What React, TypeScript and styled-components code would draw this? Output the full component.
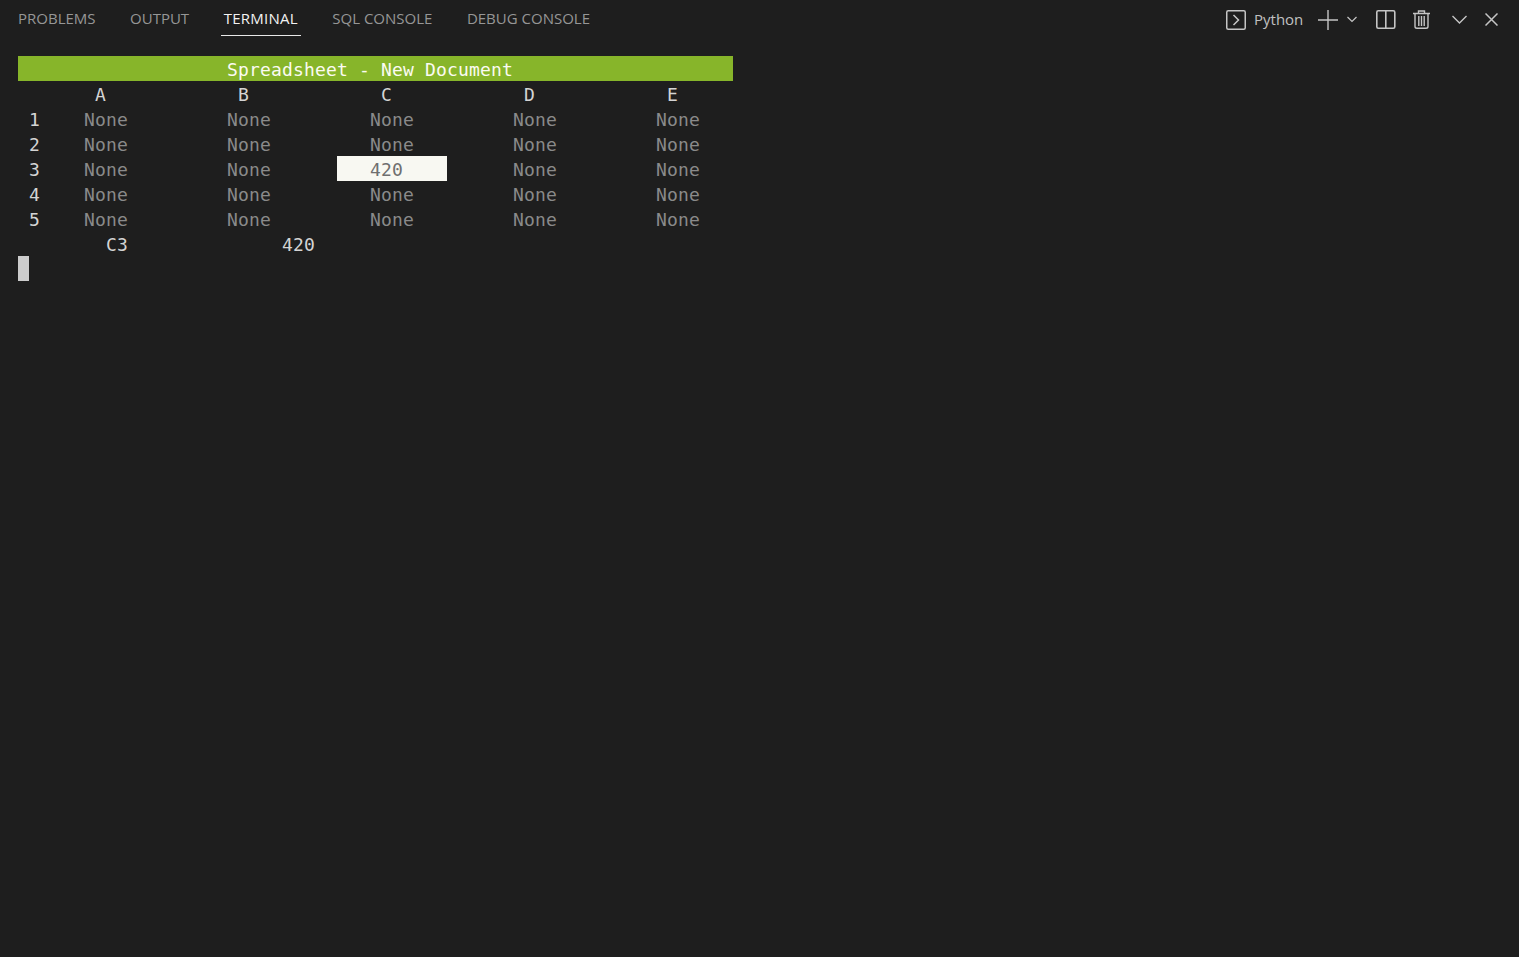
import React from "react";
import styled, { createGlobalStyle } from "styled-components";

const Global = createGlobalStyle`
  html, body { margin: 0; padding: 0; background: #1e1e1e; }
  #root { min-height: 957px; }
`;

const Page = styled.div`
  width: 1519px;
  height: 957px;
  background: #1e1e1e;
  display: flex;
  flex-direction: column;
  overflow: hidden;
`;

const Header = styled.header`
  height: 36px;
  padding: 0 21px 0 15px;
  display: flex;
  justify-content: space-between;
  align-items: flex-start;
`;

const Tabs = styled.nav`
  display: flex;
  gap: 28.5px;
`;

const Tab = styled.div<{ $active?: boolean }>`
  height: 35px;
  padding: 0 3px;
  line-height: 37px;
  font-family: "Open Sans", "Liberation Sans", sans-serif;
  font-size: 15px;
  letter-spacing: ${(p) => (p.$active ? "0.25px" : "0")};
  color: ${(p) => (p.$active ? "#f2f2f2" : "#969696")};
  border-bottom: 1px solid ${(p) => (p.$active ? "#e8e8e8" : "transparent")};
  white-space: nowrap;
`;

const Actions = styled.div`
  display: flex;
  align-items: center;
  height: 39px;
  color: #c5c5c5;
`;

const IconSlot = styled.span<{ $w: number; $ml: number }>`
  display: flex;
  width: ${(p) => p.$w}px;
  margin-left: ${(p) => p.$ml}px;
  flex: none;
`;

const ProfileName = styled.span`
  margin-left: 8px;
  width: 50px;
  font-family: "Open Sans", "Liberation Sans", sans-serif;
  font-size: 15px;
  line-height: 37px;
  color: #c0c0c0;
`;

const Terminal = styled.main`
  padding: 20px 18px 0;
  font-family: "DejaVu Sans Mono", "Liberation Mono", monospace;
  font-size: 18px;
  letter-spacing: 0.16px;
  line-height: 27px;
  white-space: pre;
`;

const TitleBar = styled.div`
  width: 715px;
  height: 25px;
  box-sizing: border-box;
  padding-left: 209px;
  background: #87b52a;
  color: #fbfbf2;
`;

const GridRow = styled.div`
  display: grid;
  grid-template-columns: 33px repeat(5, 143px);
  height: 25px;
`;

const RowLabel = styled.div`
  padding-left: 11px;
  color: #d4d4d4;
`;

const ColumnHead = styled.div`
  padding-left: 44px;
  color: #d4d4d4;
`;

const Cell = styled.div<{ $selected?: boolean }>`
  width: 110px;
  height: 25px;
  box-sizing: border-box;
  padding-left: 33px;
  color: ${(p) => (p.$selected ? "#6f6f6f" : "#8a8a8a")};
  background: ${(p) => (p.$selected ? "#f8f8f2" : "transparent")};
`;

const StatusRow = styled.div`
  display: grid;
  grid-template-columns: 88px 176px auto;
  height: 25px;
  color: #d4d4d4;
`;

const Cursor = styled.div`
  width: 11px;
  height: 25px;
  background: #cccccc;
`;

const columns = ["A", "B", "C", "D", "E"];
const rows = [1, 2, 3, 4, 5];

export default function App() {
  return (
    <Page>
      <Global />
      <Header>
        <Tabs>
          <Tab>PROBLEMS</Tab>
          <Tab>OUTPUT</Tab>
          <Tab $active>TERMINAL</Tab>
          <Tab>SQL CONSOLE</Tab>
          <Tab>DEBUG CONSOLE</Tab>
        </Tabs>
        <Actions>
          <IconSlot $w={20} $ml={0}>
            <svg width="20" height="20" viewBox="0 0 20 20" fill="none" stroke="currentColor" strokeWidth="1.5">
              <rect x="0.75" y="0.75" width="18.5" height="18.5" rx="1.5" />
              <path d="M7.5 5 L12.5 10 L7.5 15" />
            </svg>
          </IconSlot>
          <ProfileName>Python</ProfileName>
          <IconSlot $w={20} $ml={14}>
            <svg width="20" height="20" viewBox="0 0 20 20" fill="none" stroke="currentColor" strokeWidth="1.4">
              <path d="M0 10 H20 M10 0 V20" />
            </svg>
          </IconSlot>
          <IconSlot $w={10} $ml={9}>
            <svg width="10" height="7" viewBox="0 0 10 7" fill="none" stroke="currentColor" strokeWidth="1.2">
              <path d="M0.5 1 L5 5.5 L9.5 1" />
            </svg>
          </IconSlot>
          <IconSlot $w={20} $ml={19}>
            <svg width="20" height="19" viewBox="0 0 20 19" fill="none" stroke="currentColor" strokeWidth="1.6">
              <rect x="0.8" y="0.8" width="18" height="17.4" rx="1.5" />
              <path d="M9.8 0.8 V18.2" />
            </svg>
          </IconSlot>
          <IconSlot $w={17} $ml={17}>
            <svg width="17" height="19" viewBox="0 0 17 19" fill="none" stroke="currentColor" strokeWidth="1.4">
              <path d="M0 3.5 H17 M5.5 3.5 V1 H11.5 V3.5 M2 3.5 V16.5 Q2 18.3 4 18.3 H13 Q15 18.3 15 16.5 V3.5 M5.8 6 V16 M8.5 6 V16 M11.2 6 V16" />
            </svg>
          </IconSlot>
          <IconSlot $w={15} $ml={22}>
            <svg width="15" height="9" viewBox="0 0 15 9" fill="none" stroke="currentColor" strokeWidth="1.4">
              <path d="M0.5 1 L7.5 8 L14.5 1" />
            </svg>
          </IconSlot>
          <IconSlot $w={13} $ml={18}>
            <svg width="13" height="13" viewBox="0 0 13 13" fill="none" stroke="currentColor" strokeWidth="1.5">
              <path d="M0.5 0.5 L12.5 12.5 M12.5 0.5 L0.5 12.5" />
            </svg>
          </IconSlot>
        </Actions>
      </Header>
      <Terminal>
        <TitleBar>Spreadsheet - New Document</TitleBar>
        <GridRow>
          <span />
          {columns.map((c) => (
            <ColumnHead key={c}>{c}</ColumnHead>
          ))}
        </GridRow>
        {rows.map((r) => (
          <GridRow key={r}>
            <RowLabel>{r}</RowLabel>
            {columns.map((c) => {
              const selected = c === "C" && r === 3;
              return (
                <Cell key={c} $selected={selected}>
                  {selected ? "420" : "None"}
                </Cell>
              );
            })}
          </GridRow>
        ))}
        <StatusRow>
          <span />
          <span>C3</span>
          <span>420</span>
        </StatusRow>
        <Cursor />
      </Terminal>
    </Page>
  );
}
